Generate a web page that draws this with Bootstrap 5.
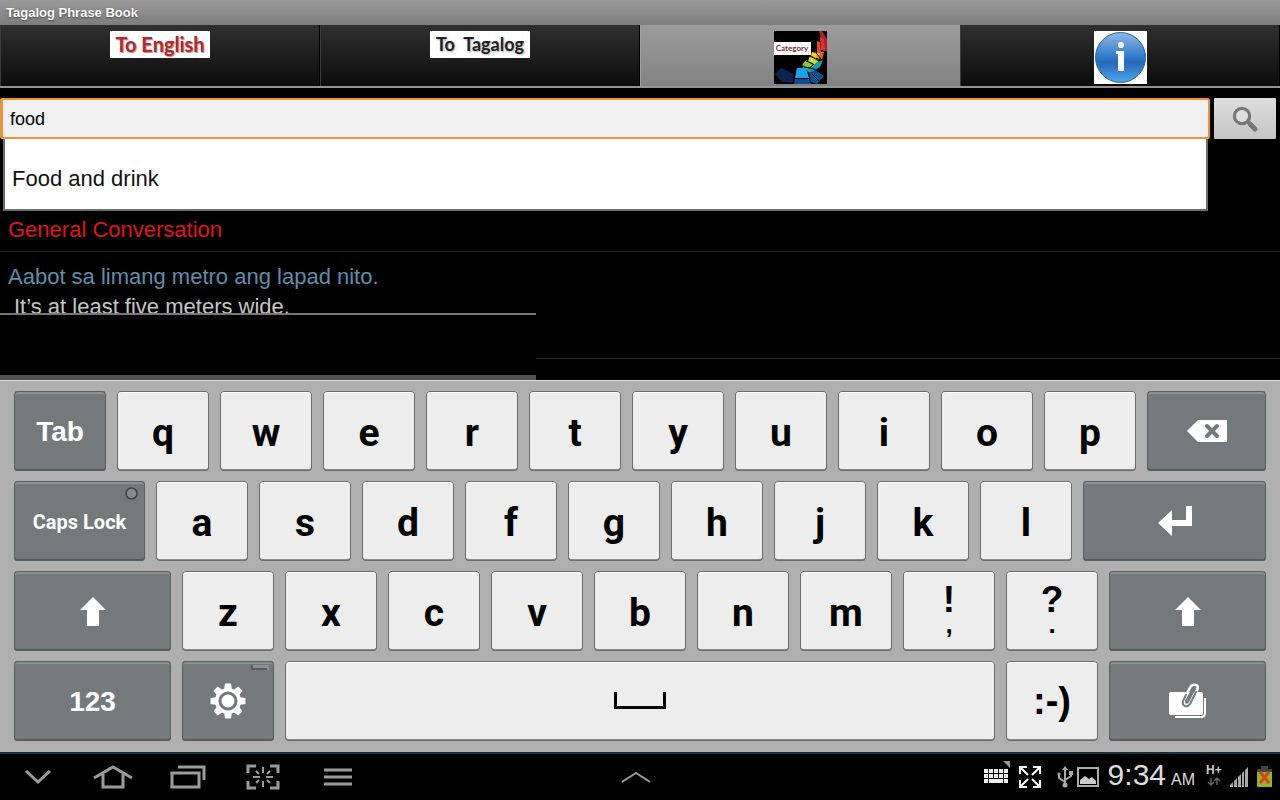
<!DOCTYPE html>
<html lang="en">
<head>
<meta charset="utf-8">
<meta name="viewport" content="width=device-width, initial-scale=1">
<title>Tagalog Phrase Book</title>
<link rel="stylesheet" href="https://cdn.jsdelivr.net/npm/bootstrap@5.3.0/dist/css/bootstrap.min.css">
<style>
body{background:#000;color:#000;font-family:"Liberation Sans",Arial,sans-serif}
svg{display:block}
.title-bar{height:25px;padding-left:6px;background:linear-gradient(#9a9a9a,#7d7d7d);color:#fff;font-size:13px;font-weight:700;line-height:25px;text-shadow:0 1px 2px #444}
.tab-strip{height:63px;border-bottom:2px solid #949494}
.tab-strip .nav-link{padding:6px 0 0;border-radius:0;background:linear-gradient(#303030,#0c0c0c);border:0;box-shadow:inset 1px 0 0 #3c3c3c,inset -1px 0 0 #000;display:flex;justify-content:center;align-items:flex-start}
.tab-strip .nav-link.active{background:linear-gradient(#9c9c9c,#828282);box-shadow:inset 1px 0 0 #a0a0a0}
.tab-label{width:100px;height:27px;background:#fff;font:700 18px/27px Lato,sans-serif;text-align:center;color:#222;text-shadow:1px 1px 2px #aaa;white-space:pre}
.tab-label.red{color:#b8242c;font-size:20px;text-shadow:1px 1px 1px #999}
.search-row{padding:10px 4px 0 0;gap:4px}
.search-box{height:41px;border:2px solid #e8943a;border-left-width:3px;border-radius:2px;background:#f0f0f0;color:#000;font-size:18px;padding:2px 7px 0;width:100%;outline:0;display:block}
.search-btn{width:62px;height:41px;border:0;border-radius:1px;padding:0;background:linear-gradient(#dedede,#c4c4c4)}
.suggestions{left:3px;right:2px;top:100%;height:72px;border:2px solid #6e6e6e;border-top:0;background:#fff;z-index:3}
.suggestions a{display:flex;align-items:center;height:100%;padding:9px 7px 0;color:#111;font-size:22px;text-decoration:none}
.phrases{padding-top:68px;margin:0;font-size:22px;line-height:30px}
.phrases li{padding:0 8px;border-bottom:1px solid #262626}
.phrases .topic{color:#e0141c;height:45px;padding-top:8px}
.phrases .pair{height:107px;padding-top:10px;color:#5f8dac}
.phrases .meaning{color:#c6c6c6;padding-left:6px}
.candidates{left:0;bottom:0;width:41.9%;height:67px;background:#000;border-top:2px solid #777;border-bottom:5px solid #525252}
.keyboard{background:#afafaf;border-top:1px solid #e0e0e0;padding:10px 14px 11px;gap:10px}
.key-row{gap:11px}
.key{flex:92 1 0;min-width:0;height:80px;border:0;padding:4px 0 0;border-radius:4px;background:#ededed;color:#000;font:700 39px/1 Roboto,sans-serif;display:flex;flex-direction:column;align-items:center;justify-content:center;box-shadow:inset 0 0 0 1px #6c6c6c,inset 0 -2px 0 #8a8a8a,inset 0 2px 0 #fff}
.key.fn,.key.space{padding:0}
.key.fn{background:#747a7c;color:#fff;box-shadow:inset 0 0 0 1px #5a5f61,inset 0 -2px 0 #53585a,inset 0 3px 0 #8b9092;font:700 28px/1 "Liberation Sans",sans-serif}
.key.text-key{padding-top:2px}
.key.w119{flex-grow:119}.key.w131{flex-grow:131}.key.w157{flex-grow:157}.key.w183{flex-grow:183}.key.space{flex-grow:710}
.key.caps{font:700 20px/1 Roboto,sans-serif}
.key .corner{top:6px;right:7px}
.key .mark-corner{top:4px;right:5px}
.key.face{font:700 38px/1 "Liberation Sans",sans-serif;padding:0}
.key.two-line{font:700 37px/36px "Liberation Sans",sans-serif;padding:0 0 10px}
.key.two-line span{font-size:26px;line-height:12px}
.sys-bar{height:48px;border-top:2px solid #1b2d38;background:#000;color:#ddd}
.sys-bar button{border:0;background:none;padding:0;width:75px;height:46px;display:flex;align-items:center;justify-content:center;color:#9b9b9b;flex:none}
.sys-side{flex:1 1 0}
.status{padding-right:8px}
.clock{font-size:30px;line-height:46px;margin:0 10px 0 9px;display:flex;align-items:baseline;gap:5px}
.clock small{font-size:16px}
</style>
</head>
<body class="d-flex flex-column min-vh-100">
<header class="title-bar">Tagalog Phrase Book</header>
<nav class="nav nav-justified tab-strip flex-nowrap" aria-label="Sections">
  <a class="nav-link" href="#english"><span class="tab-label red">To English</span></a>
  <a class="nav-link" href="#tagalog"><span class="tab-label">To  Tagalog</span></a>
  <a class="nav-link active" href="#category" aria-current="page">
    <svg width="53" height="53" viewBox="0 0 53 53" role="img" aria-label="Category">
      <rect width="53" height="53"/>
      <path d="M45 0h3l5 8v12h-4l-1-10z" fill="#b01f26"/><path d="M46 6l4 2 1 11h-4z" fill="#e03430"/>
      <path d="M43 10l3 1 1 10-4 1z" fill="#e8492a"/><path d="M47 21h3l-2 8-3-2z" fill="#f05a28"/>
      <path d="M42 22l5-1-2 7-4-2z" fill="#f59b20"/><path d="M38 21l5 1-1 5-5-2z" fill="#f7d02c"/>
      <path d="M36 25l9 4-3 5-8-4z" fill="#c8dc32"/><path d="M32 29l7 4-4 4-7-3z" fill="#8cc63e"/>
      <path d="M30 34l6 3 6-4 3 2-8 7-8-5z" fill="#2cad86"/><path d="M43 31l6-2-3 7-9 6-4-2z" fill="#1c9ca0"/>
      <path d="M23 37h9l3 10H21z" fill="#17a2ee"/><path d="M35 42l6-3 9 6-7 8-6-2z" fill="#124f93"/>
      <path d="M21 48h14l2 5H20z" fill="#0d4c91"/><path d="M1 43l6-6 13 6-2 9-10-1z" fill="#0a2350"/>
      <path d="M42 22l6 7M36 25l9 5M32 30l7 3M30 36l6 1 7 2M38 43l7 7" stroke="#000" fill="none"/>
      <rect y="11" width="37" height="13" fill="#fff"/>
      <text x="18" y="20" text-anchor="middle" font-family="Lato" font-weight="700" font-size="8" fill="#92202a">Category</text>
    </svg></a>
  <a class="nav-link" href="#info">
    <svg width="53" height="53" viewBox="0 0 53 53" role="img" aria-label="Information">
      <defs><linearGradient id="ball" x2="0" y2="1"><stop stop-color="#8dbae6"/><stop offset=".5" stop-color="#2f78c8"/><stop offset=".6" stop-color="#2468ba"/><stop offset="1" stop-color="#52a8ee"/></linearGradient></defs>
      <rect width="53" height="53" fill="#fff"/><circle cx="26.500" cy="26.500" r="25" fill="url(#ball)" stroke="#2c5f9e"/>
      <circle cx="27" cy="14" r="3" fill="#fff"/><path d="M22 20h8v20h-6V23h-2z" fill="#fff"/>
    </svg></a>
</nav>
<main class="position-relative flex-grow-1 overflow-hidden">
  <form class="search-row d-flex">
    <div class="position-relative flex-grow-1">
      <input class="search-box" type="text" value="food" aria-label="Search phrases">
      <div class="suggestions position-absolute"><a href="#food">Food and drink</a></div>
    </div>
    <button class="search-btn d-flex align-items-center justify-content-center" type="button" aria-label="Search">
      <svg width="28" height="28" viewBox="0 0 28 28" fill="none"><path d="M19 19l5 5" stroke="#777" stroke-width="5" stroke-linecap="round"/><path d="M16 16l4 4" stroke="#777" stroke-width="3"/><circle cx="11" cy="11" r="7.500" stroke="#777" stroke-width="3.500"/><circle cx="11" cy="11" r="6" fill="#ddd"/></svg>
    </button>
  </form>
  <ul class="phrases list-unstyled">
    <li class="topic">General Conversation</li>
    <li class="pair"><div>Aabot sa limang metro ang lapad nito.</div><div class="meaning">It’s at least five meters wide.</div></li>
  </ul>
  <div class="candidates position-absolute"></div>
</main>
<section class="keyboard d-flex flex-column" aria-label="Keyboard">
  <div class="key-row d-flex">
    <button class="key fn text-key">Tab</button><button class="key">q</button><button class="key">w</button><button class="key">e</button><button class="key">r</button><button class="key">t</button><button class="key">y</button><button class="key">u</button><button class="key">i</button><button class="key">o</button><button class="key">p</button>
    <button class="key fn w119" aria-label="Backspace"><svg width="40" height="22" viewBox="0 0 40 22"><path d="M0 11L11 0h29v22H11z" fill="#fff"/><path d="M20 6l10 10M30 6L20 16" stroke="#747a7c" stroke-width="4" stroke-linecap="round"/></svg></button>
  </div>
  <div class="key-row d-flex">
    <button class="key fn caps text-key w131 position-relative">Caps Lock<svg class="corner position-absolute" width="13" height="13" viewBox="0 0 13 13"><circle cx="6.500" cy="6.500" r="5.500" fill="#868b8d" stroke="#3d4244" stroke-width="1.500"/></svg></button><button class="key">a</button><button class="key">s</button><button class="key">d</button><button class="key">f</button><button class="key">g</button><button class="key">h</button><button class="key">j</button><button class="key">k</button><button class="key">l</button>
    <button class="key fn w183" aria-label="Enter"><svg width="34" height="30" viewBox="0 0 34 30"><path d="M0 17L14 4v10h14V0h6v20H14v10z" fill="#fff"/></svg></button>
  </div>
  <div class="key-row d-flex">
    <button class="key fn w157" aria-label="Left shift"><svg width="26" height="29" viewBox="0 0 26 29"><path d="M13 0l13 13h-7v16H7V13H0z" fill="#fff"/></svg></button><button class="key">z</button><button class="key">x</button><button class="key">c</button><button class="key">v</button><button class="key">b</button><button class="key">n</button><button class="key">m</button><button class="key two-line">!<span>,</span></button><button class="key two-line">?<span>.</span></button>
    <button class="key fn w157" aria-label="Right shift"><svg width="26" height="29" viewBox="0 0 26 29"><path d="M13 0l13 13h-7v16H7V13H0z" fill="#fff"/></svg></button>
  </div>
  <div class="key-row d-flex">
    <button class="key fn text-key w157">123</button>
    <button class="key fn position-relative" aria-label="Keyboard settings"><svg width="36" height="36" viewBox="-18 -18 36 36"><g fill="#fff"><circle r="13"/><g id="teeth"><path d="M-3-17.500h6l1 7h-8zM-3 17.500h6l1-7h-8zM-17.500-3v6l7 1v-8zM17.500-3v6l-7 1v-8z"/></g><use href="#teeth" transform="rotate(45)"/></g><circle r="8" fill="none" stroke="#747a7c" stroke-width="3"/></svg><svg class="mark-corner position-absolute" width="18" height="5" viewBox="0 0 18 5"><path d="M0 0h18v5H0z" fill="#8b9092"/><path d="M1 0v4h15" fill="none" stroke="#444b50" stroke-width="1.500"/></svg></button>
    <button class="key space" aria-label="Space"><svg width="52" height="18" viewBox="0 0 52 18"><path d="M1.500 0v15.500h49V0" fill="none" stroke="#000" stroke-width="3"/></svg></button>
    <button class="key face">:-)</button>
    <button class="key fn w157" aria-label="Clipboard"><svg width="38" height="36" viewBox="0 0 38 36" fill="none"><path d="M6 34h26q4 0 4-4V15" stroke="#fff" stroke-width="2"/><rect y="9" width="34" height="23" rx="2" fill="#fff"/><path d="M17 12l5-9q2-2 5-1t1 5l-1 2" stroke="#fff" stroke-width="2.500"/><path d="M17 12l-3 6q-1 4 2 5t5-2l6-12M24 9l-5 10q-2 2-2-1l5-9" stroke="#747a7c" stroke-width="2" stroke-linecap="round"/></svg></button>
  </div>
</section>
<footer class="sys-bar d-flex align-items-center">
  <div class="sys-side d-flex">
    <button aria-label="Hide keyboard"><svg width="28" height="14" viewBox="0 0 28 14" fill="none" stroke="currentColor" stroke-width="3"><path d="M2 1l12 11L26 1"/></svg></button>
    <button aria-label="Home"><svg width="40" height="24" viewBox="0 0 40 24" fill="none" stroke="currentColor" stroke-width="3"><path d="M1 13L20 2l19 11M10 9v13h20V9"/></svg></button>
    <button aria-label="Recent apps"><svg width="36" height="24" viewBox="0 0 36 24" fill="none" stroke="currentColor" stroke-width="3"><path d="M2 8h27v14H2zM8 2h26v13"/></svg></button>
    <button aria-label="Screenshot"><svg width="34" height="26" viewBox="0 0 34 26" fill="none" stroke="currentColor"><path d="M2 9V2h8M24 2h8v7M32 17v7h-8M10 24H2v-7" stroke-width="3"/><path d="M17 3v6M17 17v6M7 13h7M20 13h7M10 7l3 3M24 7l-3 3M10 19l3-3M24 19l-3-3" stroke-width="2"/></svg></button>
    <button aria-label="Menu"><svg width="28" height="18" viewBox="0 0 28 18" fill="none" stroke="currentColor" stroke-width="3"><path d="M0 2h28M0 9h28M0 16h28"/></svg></button>
  </div>
  <button aria-label="Show tray"><svg width="30" height="12" viewBox="0 0 30 12" fill="none" stroke="currentColor" stroke-width="2"><path d="M1 11L15 2l14 9"/></svg></button>
  <div class="sys-side status d-flex align-items-center justify-content-end">
    <svg class="me-2 mb-2" width="28" height="24" viewBox="0 0 28 24"><path d="M20 0h7v7z" fill="#999"/><path d="M1 10h24M1 15h24" stroke="#eee" stroke-width="4" stroke-dasharray="4 1"/><path d="M1 20h4M6 20h14M21 20h4" stroke="#eee" stroke-width="4"/></svg>
    <svg class="me-3" width="22" height="22" viewBox="0 0 22 22" fill="none" stroke="#fff" stroke-width="2"><path d="M1 8V1h7M1 1l8 8M14 1h7v7M21 1l-8 8M1 14v7h7M1 21l8-8M14 21h7v-7M21 21l-8-8"/></svg>
    <svg class="me-1" width="16" height="22" viewBox="0 0 16 22" fill="none" stroke="#aaa" stroke-width="2"><path d="M8 18V3M2 8v4l6 4M14 7v3l-6 4"/><path d="M5 4l3-4 3 4z" fill="#aaa" stroke="none"/><circle cx="8" cy="19" r="2.500" fill="#aaa" stroke="none"/><circle cx="2" cy="8" r="1.500" fill="#aaa" stroke="none"/><path d="M12 5h4v4h-4z" fill="#aaa" stroke="none"/></svg>
    <svg width="22" height="20" viewBox="0 0 22 20"><rect x="1" y="1" width="20" height="18" fill="none" stroke="#aaa" stroke-width="2"/><path d="M3 17v-4l5-4 4 3 3-2 4 4v3z" fill="#ccc"/></svg>
    <span class="clock"><span>9:34</span><small>AM</small></span>
    <svg width="20" height="26" viewBox="0 0 20 26"><text x="1" y="10" font-family="Liberation Sans" font-weight="700" font-size="12" fill="#ccc">H+</text><path d="M6 14v7M3 18l3 3 3-3M12 21v-7M9 17l3-3 3 3" fill="none" stroke="#666" stroke-width="1.500"/></svg>
    <svg class="ms-1 me-2" width="20" height="20" viewBox="0 0 20 20"><path d="M1 20v-2l3-3v5zM5 20v-6l3-3v9zM9 20V10l3-3v13zM13 20V6l2-2v16zM16 20V3l3-3v20z" fill="#aaa"/></svg>
    <svg width="15" height="22" viewBox="0 0 15 22"><path d="M4 0h7v3h4v5H0V3h4z" fill="#444"/><path d="M0 6h15v15H0z" fill="#8db82c"/><path d="M3 6l9 11M12 6L3 17" stroke="#e0401c" stroke-width="3"/></svg>
  </div>
</footer>
<script src="https://cdn.jsdelivr.net/npm/bootstrap@5.3.0/dist/js/bootstrap.bundle.min.js"></script>
</body>
</html>
